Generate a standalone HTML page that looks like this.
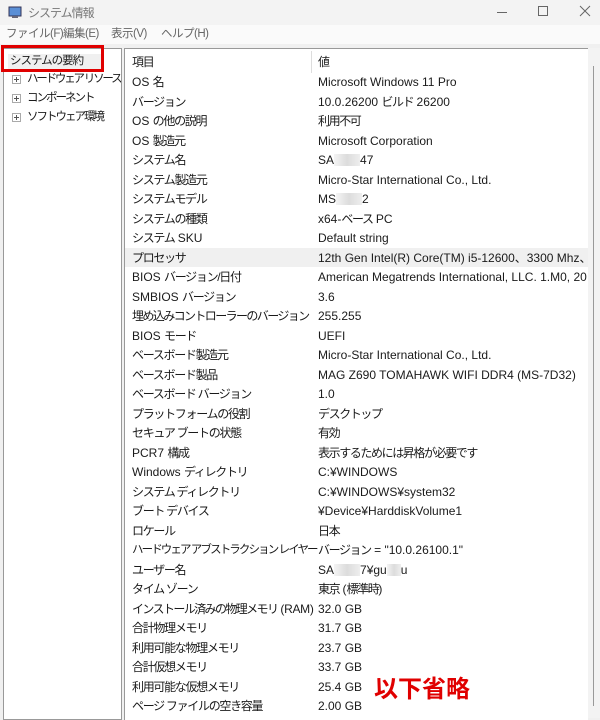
<!DOCTYPE html>
<html><head><meta charset="utf-8"><style>
*{margin:0;padding:0;box-sizing:border-box}
body{width:600px;height:718px;overflow:hidden;background:#f0f0f0;font-family:"Liberation Sans","Noto Sans CJK JP",sans-serif;font-size:12px;color:#1a1a1a;position:relative}
.title{position:absolute;left:0;top:0;width:600px;height:25px;background:#f3f3f3}
.title .t{position:absolute;left:28px;top:4px;color:#777;font-size:12px;letter-spacing:-1px}
.menu{position:absolute;left:0;top:25px;width:600px;height:19px;background:#fafafa;color:#666;font-size:11.5px;letter-spacing:-0.5px}
.menu span{position:absolute;top:2px;line-height:15px}
.left{position:absolute;left:3px;top:48px;width:119px;height:672px;background:#fff;border:1px solid #999;overflow:hidden}
.right{position:absolute;left:124px;top:48px;width:464px;height:672px;background:#fff;border-left:1px solid #999;border-top:1px solid #999;overflow:hidden}
.sb{position:absolute;left:588px;top:48px;width:12px;height:670px;background:#f3f3f3}
.sb div{position:absolute;left:5px;top:18px;width:1px;height:640px;background:#999}
.row{position:absolute;left:0;width:470px;height:19.5px}
.row .a{position:absolute;left:7px;top:2px;white-space:nowrap;line-height:16px;letter-spacing:-1.3px}
.row .b{position:absolute;left:193px;top:2px;white-space:nowrap;line-height:16px}
.l{letter-spacing:0}
.j{letter-spacing:-1.4px}
.hl{background:#f0f0f0}
.tree{position:absolute;font-size:11.5px;white-space:nowrap;letter-spacing:-2px;line-height:15px}
.pl{position:absolute;left:-15px;top:3px;width:9px;height:9px;border:1px solid #aaa}
.pl:before{content:"";position:absolute;left:1px;top:3px;width:5px;height:1px;background:#555}
.pl:after{content:"";position:absolute;left:3px;top:1px;width:1px;height:5px;background:#555}
.blur{display:inline-block;width:26px;height:12px;background:linear-gradient(90deg,#f4f4f4,#dcdcdc,#eeeeee);vertical-align:-2px}
</style></head><body>
<div class="title">
<svg style="position:absolute;left:8px;top:6px" width="14" height="13"><rect x="1" y="1" width="12" height="9" fill="#5a8fd6" stroke="#335"/><rect x="4" y="10" width="6" height="2" fill="#667"/></svg>
<span class="t">システム情報</span>
<div style="position:absolute;left:497px;top:12px;width:10px;height:1px;background:#666"></div>
<div style="position:absolute;left:538px;top:6px;width:10px;height:10px;border:1px solid #666"></div>
<svg style="position:absolute;left:579px;top:5px" width="12" height="12"><path d="M1 1L11 11M11 1L1 11" stroke="#666" stroke-width="1"/></svg>
</div>
<div class="menu"><span style="left:6px">ファイル(F)</span><span style="left:63px">編集(E)</span><span style="left:111px">表示(V)</span><span style="left:161px">ヘルプ(H)</span></div>
<div class="left">
<div style="position:absolute;left:4px;top:5px;width:94px;height:16px;background:#f0f0f0"></div>
<div class="tree" style="left:6px;top:5px;letter-spacing:-1px">システムの要約</div>
<div class="tree" style="left:23px;top:23px;letter-spacing:-2.2px"><span class="pl"></span>ハードウェア リソース</div>
<div class="tree" style="left:23px;top:42px"><span class="pl"></span>コンポーネント</div>
<div class="tree" style="left:23px;top:61px"><span class="pl"></span>ソフトウェア環境</div>
</div>
<div style="position:absolute;left:1px;top:45px;width:103px;height:27px;border:3px solid #e00000"></div>
<div class="right">
<div style="position:absolute;left:186px;top:2px;width:1px;height:22px;background:#ddd"></div>
<div class="row" style="top:3px"><span class="a">項目</span><span class="b">値</span></div>
<div class="row" style="top:23px"><span class="a"><span class="l">OS </span>名</span><span class="b">Microsoft Windows 11 Pro</span></div>
<div class="row" style="top:42.5px"><span class="a">バージョン</span><span class="b">10.0.26200 <span class="j">ビルド</span> 26200</span></div>
<div class="row" style="top:62px"><span class="a"><span class="l">OS </span>の他の説明</span><span class="b j">利用不可</span></div>
<div class="row" style="top:81.5px"><span class="a"><span class="l">OS </span>製造元</span><span class="b">Microsoft Corporation</span></div>
<div class="row" style="top:101px"><span class="a">システム名</span><span class="b">SA<span class="blur"></span>47</span></div>
<div class="row" style="top:120.5px"><span class="a">システム製造元</span><span class="b">Micro-Star International Co., Ltd.</span></div>
<div class="row" style="top:140px"><span class="a">システムモデル</span><span class="b">MS<span class="blur"></span>2</span></div>
<div class="row" style="top:159.5px"><span class="a">システムの種類</span><span class="b">x64-<span class="j">ベース</span> PC</span></div>
<div class="row" style="top:179px"><span class="a">システム<span class="l"> SKU</span></span><span class="b">Default string</span></div>
<div class="row hl" style="top:198.5px"><span class="a">プロセッサ</span><span class="b">12th Gen Intel(R) Core(TM) i5-12600、3300 Mhz、6</span></div>
<div class="row" style="top:218px"><span class="a"><span class="l">BIOS </span>バージョン/日付</span><span class="b">American Megatrends International, LLC. 1.M0, 20</span></div>
<div class="row" style="top:237.5px"><span class="a"><span class="l">SMBIOS </span>バージョン</span><span class="b">3.6</span></div>
<div class="row" style="top:257px"><span class="a" style="letter-spacing:-1.6px">埋め込みコントローラーのバージョン</span><span class="b">255.255</span></div>
<div class="row" style="top:276.5px"><span class="a"><span class="l">BIOS </span>モード</span><span class="b">UEFI</span></div>
<div class="row" style="top:296px"><span class="a">ベースボード製造元</span><span class="b">Micro-Star International Co., Ltd.</span></div>
<div class="row" style="top:315.5px"><span class="a">ベースボード製品</span><span class="b">MAG Z690 TOMAHAWK WIFI DDR4 (MS-7D32)</span></div>
<div class="row" style="top:335px"><span class="a">ベースボード バージョン</span><span class="b">1.0</span></div>
<div class="row" style="top:354.5px"><span class="a">プラットフォームの役割</span><span class="b j">デスクトップ</span></div>
<div class="row" style="top:374px"><span class="a">セキュア ブートの状態</span><span class="b j">有効</span></div>
<div class="row" style="top:393.5px"><span class="a"><span class="l">PCR7 </span>構成</span><span class="b j">表示するためには昇格が必要です</span></div>
<div class="row" style="top:413px"><span class="a"><span class="l">Windows </span>ディレクトリ</span><span class="b">C:¥WINDOWS</span></div>
<div class="row" style="top:432.5px"><span class="a">システム ディレクトリ</span><span class="b">C:¥WINDOWS¥system32</span></div>
<div class="row" style="top:452px"><span class="a">ブート デバイス</span><span class="b">¥Device¥HarddiskVolume1</span></div>
<div class="row" style="top:471.5px"><span class="a">ロケール</span><span class="b j">日本</span></div>
<div class="row" style="top:491px"><span class="a" style="letter-spacing:-1.9px;font-size:11.5px">ハードウェア アブストラクション レイヤー</span><span class="b"><span class="j">バージョン</span> = "10.0.26100.1"</span></div>
<div class="row" style="top:510.5px"><span class="a">ユーザー名</span><span class="b">SA<span class="blur"></span>7¥gu<span class="blur" style="width:14px"></span>u</span></div>
<div class="row" style="top:530px"><span class="a">タイム ゾーン</span><span class="b"><span class="j">東京</span> (<span class="j">標準時</span>)</span></div>
<div class="row" style="top:549.5px"><span class="a" style="letter-spacing:-1.6px">インストール済みの物理メモリ<span style="letter-spacing:-0.3px"> (RAM)</span></span><span class="b">32.0 GB</span></div>
<div class="row" style="top:569px"><span class="a">合計物理メモリ</span><span class="b">31.7 GB</span></div>
<div class="row" style="top:588.5px"><span class="a">利用可能な物理メモリ</span><span class="b">23.7 GB</span></div>
<div class="row" style="top:608px"><span class="a">合計仮想メモリ</span><span class="b">33.7 GB</span></div>
<div class="row" style="top:627.5px"><span class="a">利用可能な仮想メモリ</span><span class="b">25.4 GB</span></div>
<div class="row" style="top:647px"><span class="a">ページ ファイルの空き容量</span><span class="b">2.00 GB</span></div>
</div>
<div class="sb"><div></div></div>
<div style="position:absolute;left:374px;top:674px;font-size:24px;font-weight:bold;color:#e00000;line-height:32px">以下省略</div>
</body></html>
